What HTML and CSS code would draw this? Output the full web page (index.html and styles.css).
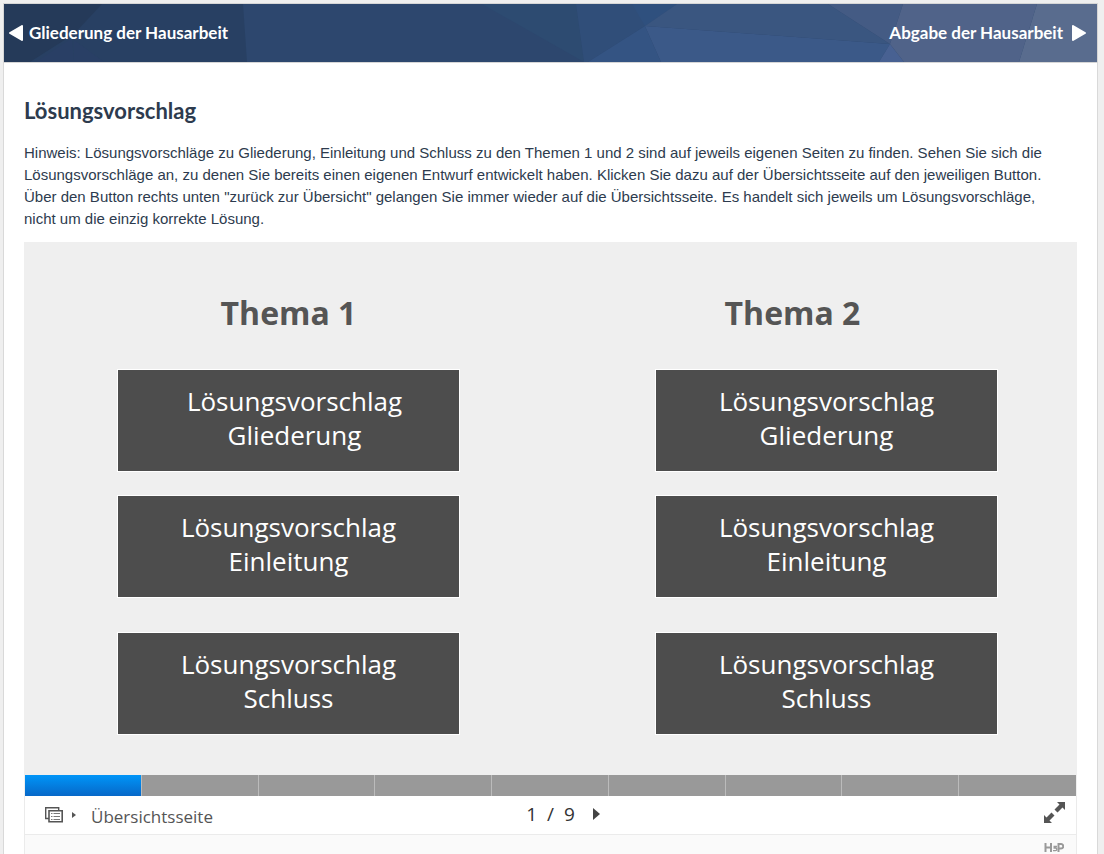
FILE: index.html
```html
<!DOCTYPE html>
<html lang="de">
<head>
<meta charset="utf-8">
<title>Lösungsvorschlag</title>
<meta name="viewport" content="width=device-width, initial-scale=1">
<link rel="stylesheet" href="styles.css">
</head>
<body>
<div class="page">
  <nav class="topbar">
    <svg class="topbar-art" viewBox="4 4 1093 58" preserveAspectRatio="none" aria-hidden="true">
      <path fill="#2d476e" d="M4 4h1093v58H4z"/>
      <path fill="#284063" d="M4 4h239l4 58H4z"/>
      <path fill="#253a59" d="M4 4h98L74 34 30 62H4z"/>
      <path fill="#293f65" d="M36 62l36-24 2 24z"/>
      <path fill="#293f65" d="M74 40l30 22H74z"/>
      <path fill="#2d4b71" d="M482 4h94l8 58z"/>
      <path fill="#304e79" d="M576 4h101l-32 22-57 36h-4z"/>
      <path fill="#2f507e" d="M632 4h45l-32 22z"/>
      <path fill="#345483" d="M645 26l16 36h-73z"/>
      <path fill="#3b5988" d="M645 26l95 7 150 11-11 18H661z"/>
      <path fill="#3a5680" d="M677 4h151l62 40-150-11-95-7z"/>
      <path fill="#445b84" d="M828 4h75l-13 40z"/>
      <path fill="#486192" d="M890 44l14 18h-25z"/>
      <path fill="#506389" d="M903 4h134l-18 58H904l-14-18z"/>
      <path fill="#596c8e" d="M1037 4h60v58h-78z"/>
    </svg>
    <a class="topbar-link" href="#gliederung">
      <svg class="nav-arrow" viewBox="0 0 14 16" aria-hidden="true"><path d="M13 1v14L1 8z"/></svg>
      Gliederung der Hausarbeit
    </a>
    <a class="topbar-link" href="#abgabe">
      Abgabe der Hausarbeit
      <svg class="nav-arrow" viewBox="0 0 14 16" aria-hidden="true"><path d="M1 1v14l12-7z"/></svg>
    </a>
  </nav>

  <main class="content">
    <h1 class="title">Lösungsvorschlag</h1>
    <p class="hint">Hinweis: Lösungsvorschläge zu Gliederung, Einleitung und Schluss zu den Themen 1 und 2 sind auf jeweils eigenen Seiten zu finden. Sehen Sie sich die<br>
      Lösungsvorschläge an, zu denen Sie bereits einen eigenen Entwurf entwickelt haben. Klicken Sie dazu auf der Übersichtsseite auf den jeweiligen Button.<br>
      Über den Button rechts unten "zurück zur Übersicht" gelangen Sie immer wieder auf die Übersichtsseite. Es handelt sich jeweils um Lösungsvorschläge,<br>
      nicht um die einzig korrekte Lösung.</p>

    <section class="player">
      <div class="slide">
        <div class="topic topic-one">
          <h2 class="topic-title">Thema 1</h2>
          <button class="tile tile-shifted" type="button">Lösungsvorschlag<br>Gliederung</button>
          <button class="tile" type="button">Lösungsvorschlag<br>Einleitung</button>
          <button class="tile tile-last" type="button">Lösungsvorschlag<br>Schluss</button>
        </div>
        <div class="topic topic-two">
          <h2 class="topic-title">Thema 2</h2>
          <button class="tile" type="button">Lösungsvorschlag<br>Gliederung</button>
          <button class="tile" type="button">Lösungsvorschlag<br>Einleitung</button>
          <button class="tile tile-last" type="button">Lösungsvorschlag<br>Schluss</button>
        </div>
      </div>

      <div class="progress">
        <a class="step step-current" href="#1" aria-label="Seite 1"></a>
        <a class="step" href="#2" aria-label="Seite 2"></a>
        <a class="step" href="#3" aria-label="Seite 3"></a>
        <a class="step" href="#4" aria-label="Seite 4"></a>
        <a class="step" href="#5" aria-label="Seite 5"></a>
        <a class="step" href="#6" aria-label="Seite 6"></a>
        <a class="step" href="#7" aria-label="Seite 7"></a>
        <a class="step" href="#8" aria-label="Seite 8"></a>
        <a class="step" href="#9" aria-label="Seite 9"></a>
      </div>

      <div class="controls">
        <button class="overview" type="button">
          <svg class="icon-slides" viewBox="0 0 18 16" aria-hidden="true">
            <path fill="none" stroke="#555" stroke-width="1.400" d="M4 11.500H.7V.7h13V3"/>
            <path fill="none" stroke="#555" stroke-width="1.600" d="M4 3.700h13.200v11H4z"/>
            <path stroke="#777" d="M6 6.500h1.500M8.500 6.500H15M6 9.500h1.500M8.500 9.500H15M6 12.500h1.500M8.500 12.500H15"/>
          </svg>
          <svg class="icon-caret" viewBox="0 0 4 6" aria-hidden="true"><path fill="#555" d="M0 0l4 3-4 3z"/></svg>
          <span class="overview-text">Übersichtsseite</span>
        </button>
        <div class="pager">
          <span>1</span><span>/</span><span>9</span>
          <button class="icon-button" type="button" aria-label="Nächste Seite">
            <svg class="icon-next" viewBox="0 0 7 12" aria-hidden="true"><path fill="#444" d="M0 0l7 6-7 6z"/></svg>
          </button>
        </div>
        <button class="icon-button fullscreen" type="button" aria-label="Vollbild">
          <svg class="icon-full" viewBox="0 0 21 21" aria-hidden="true">
            <path fill="#555" d="M13 0h8v8l-2.500-2.500-5 5-3-3 5-5z"/>
            <path fill="#555" d="M8 21H0v-8l2.500 2.500 5-5 3 3-5 5z"/>
          </svg>
        </button>
      </div>

      <div class="actions">
        <a class="brand" href="#h5p" aria-label="H5P">
          <svg class="brand-mark" viewBox="0 0 20 9" aria-hidden="true">
            <path fill="none" stroke="#999" stroke-width="2" d="M1.500 0v9M1.500 4.500H7M7 0v9M14.500 9V1h2.500a2 2 0 0 1 0 4.500h-2.500"/>
            <path fill="none" stroke="#999" stroke-width="1.300" d="M13 3.500H9.500M9.500 5h2a1.200 1.200 0 0 1 0 2.700H9"/>
          </svg>
        </a>
      </div>
    </section>
  </main>
</div>
</body>
</html>
```
FILE: styles.css
```css
* {
  box-sizing: border-box;
}

body {
  margin: 0;
  background: #efefef;
  color: #2d3b4e;
  font-family: Lato, "Open Sans", sans-serif;
}

button {
  margin: 0;
  padding: 0;
  border: 0;
  background: none;
  color: inherit;
  font: inherit;
  cursor: pointer;
}

svg {
  display: block;
}

.page {
  display: flex;
  flex-direction: column;
  min-height: 100vh;
  padding: 3px 6px 0 3px;
}

.topbar {
  position: relative;
  display: flex;
  flex: none;
  align-items: center;
  justify-content: space-between;
  height: 60px;
  padding: 0 11px 0 5px;
  border: 1px solid #d6d6d6;
}

.topbar-art {
  position: absolute;
  inset: 0;
  width: 100%;
  height: 100%;
}

.topbar-link {
  position: relative;
  display: flex;
  align-items: center;
  gap: 6px;
  color: #fff;
  font-size: 17px;
  font-weight: 700;
  line-height: 24px;
  text-decoration: none;
}

.topbar-link:last-child {
  gap: 9px;
}

.nav-arrow {
  width: 14px;
  height: 16px;
  fill: #fff;
  stroke: #fff;
  stroke-width: 2;
  stroke-linejoin: round;
}

.content {
  display: flex;
  flex: 1;
  flex-direction: column;
  padding: 32px 20px 0;
  border: 1px solid #d9d9d9;
  border-width: 0 1px;
  background: #fff;
}

.title {
  margin: 0 0 15px;
  font-size: 22px;
  font-weight: 700;
  line-height: 32px;
}

.hint {
  margin: 0 0 12px;
  font-family: "Liberation Sans", Arial, sans-serif;
  font-size: 15px;
  line-height: 22px;
}

.player {
  display: flex;
  flex: 1;
  flex-direction: column;
  color: #555;
  font-family: "Open Sans", "Noto Sans", sans-serif;
}

.slide {
  display: grid;
  grid-template-columns: 93fr 343fr 195fr 343fr 79fr;
  padding: 47px 0 40px;
  background: #efefef;
}

.topic {
  display: flex;
  flex-direction: column;
  gap: 23px;
}

.topic-one {
  grid-column: 2;
}

.topic-two {
  grid-column: 4;
}

.topic-title {
  margin: 0 0 9px;
  font-size: 32px;
  font-weight: 700;
  line-height: 48px;
  text-align: center;
}

.topic-two .topic-title {
  padding-right: 68px;
}

.tile {
  padding: 14px 0 19px;
  border: 1px solid #fff;
  background: #4d4d4d;
  color: #fff;
  font-size: 26px;
  line-height: 34px;
}

.tile-shifted {
  padding-left: 12px;
}

.tile-last {
  margin-top: 11px;
}

.progress {
  display: grid;
  grid-template-columns: repeat(9, 1fr);
  height: 21px;
  border: 1px solid #efefef;
  border-width: 0 1px;
}

.step {
  border-right: 1px solid #bbb;
  background: #999;
}

.step:last-child {
  border-right: 0;
}

.step-current {
  background: linear-gradient(#0095f8, #0768c8);
}

.controls {
  display: grid;
  grid-template-columns: 1fr auto 1fr;
  align-items: center;
  height: 39px;
  padding: 0 11px 0 20px;
  border: 1px solid #ebebeb;
  border-top: 0;
}

.overview {
  display: flex;
  align-items: center;
  justify-self: start;
  gap: 9px;
}

.icon-slides {
  width: 18px;
  height: 16px;
}

.icon-caret {
  width: 4px;
  height: 6px;
}

.overview-text {
  padding: 4px 0 0 6px;
  font-size: 17px;
  line-height: 26px;
}

.pager {
  display: flex;
  align-items: center;
  gap: 10px;
  padding: 0 0 2px 24px;
  color: #333;
  font-size: 19px;
  line-height: 26px;
}

.icon-button {
  display: flex;
  padding: 4px 8px;
}

.icon-next {
  width: 7px;
  height: 12px;
}

.fullscreen {
  justify-self: end;
  padding: 0 0 5px;
}

.icon-full {
  width: 21px;
  height: 21px;
}

.actions {
  display: flex;
  flex: 1;
  justify-content: flex-end;
  padding: 8px 12px 0;
  border: 1px solid #ebebeb;
  border-width: 0 1px;
  background: #fafafa;
}

.brand-mark {
  width: 20px;
  height: 9px;
}
```
